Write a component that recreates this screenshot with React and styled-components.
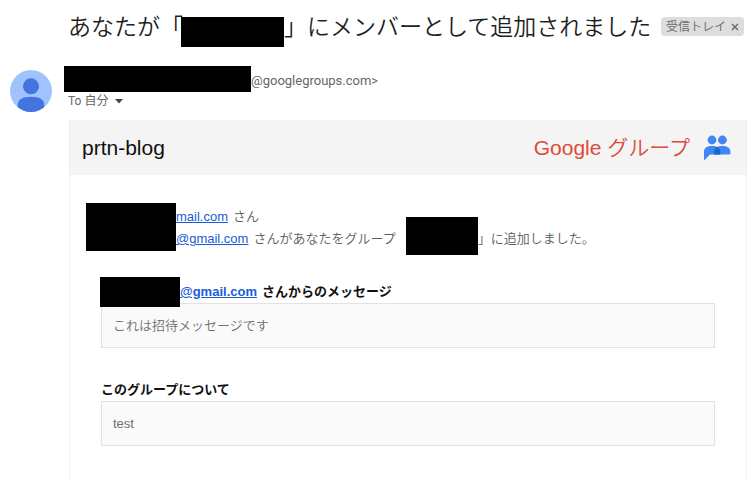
import styled, { createGlobalStyle } from "styled-components"

const GlobalStyle = createGlobalStyle`
  * {
    box-sizing: border-box;
  }

  body {
    margin: 0;
    background: #fff;
    overflow: hidden;
    font-family: "Liberation Sans", "Noto Sans CJK JP", sans-serif;
    font-size: 13px;
    color: #5c5c5c;
  }

  button {
    display: flex;
    padding: 0;
    border: 0;
    background: none;
    cursor: pointer;
  }
`

const Redacted = styled.span`
  position: relative;
  flex: none;
  width: ${(p) => p.$width}px;
  height: ${(p) => p.$height}px;
  margin-top: ${(p) => p.$top || 0}px;
  margin-left: ${(p) => p.$left || 0}px;
  background: #000;
`

const SubjectRow = styled.header`
  display: flex;
  align-items: flex-start;
  height: 47px;
  padding: 11px 6px 0 68px;
`

const Subject = styled.h1`
  display: flex;
  align-items: flex-start;
  margin: 0;
  font-family: "Noto Sans CJK JP", sans-serif;
  font-size: 23px;
  font-weight: 350;
  line-height: 28px;
  white-space: nowrap;
  color: #1f1f1f;
`

const Label = styled.span`
  display: flex;
  align-items: center;
  gap: 5px;
  height: 19px;
  margin: 6px 0 0 auto;
  padding: 0 5px;
  border-radius: 4px;
  background: #ddd;
  font-size: 12px;
  font-weight: 350;
  line-height: 18px;
  white-space: nowrap;
  color: #666;
`

const SenderRow = styled.div`
  display: flex;
  gap: 12px;
  margin-top: 19px;
  padding-left: 10px;
`

const Avatar = styled.svg`
  flex: none;
  width: 42px;
  height: 42px;
  margin-top: 4px;
`

const SenderLine = styled.div`
  display: flex;
  height: 26px;
  font-family: Roboto, sans-serif;
  line-height: 30px;
  color: #666;
`

const Recipient = styled.div`
  display: flex;
  align-items: center;
  gap: 7px;
  height: 18px;
  padding-left: 4px;
  font-family: Roboto, "Noto Sans CJK JP", sans-serif;
  font-size: 12px;
  line-height: 18px;
  color: #666;
`

const Card = styled.main`
  min-height: 380px;
  margin: 8px 3px 0 69px;
  border: 1px solid #f1f1f1;
  border-top: 0;
`

const CardHeader = styled.div`
  display: flex;
  align-items: center;
  justify-content: space-between;
  height: 55px;
  padding: 0 15px 0 12px;
  background: #f4f4f4;
  font-size: 21px;
  line-height: 24px;
`

const GroupName = styled.span`
  color: #111;
`

const Brand = styled.span`
  display: flex;
  align-items: center;
  gap: 13px;
  font-weight: 350;
  color: #dd4b39;
`

const GroupsLogo = styled.svg`
  width: 28px;
  height: 26px;
`

const Intro = styled.div`
  display: flex;
  padding: 28px 16px 0;
`

const Lines = styled.div`
  padding-top: 3px;
  line-height: 22px;
`

const Line = styled.div`
  display: flex;
  gap: 5px;
  height: 22px;
  font-weight: 350;
  white-space: nowrap;
`

const Mail = styled.a`
  font-weight: ${(p) => (p.$bold ? 700 : 400)};
  color: #1a5cd7;
`

const Closing = styled.span`
  display: flex;
`

const Section = styled.section`
  padding: 0 31px;
  margin-top: ${(p) => p.$gap}px;
`

const SectionTitle = styled.h2`
  display: flex;
  gap: 5px;
  height: 26px;
  margin: 0;
  font-size: 13px;
  font-weight: 700;
  line-height: 30px;
  white-space: nowrap;
  color: #111;
`

const Sender = styled.span`
  display: flex;
`

const Message = styled.p`
  height: 45px;
  margin: 0;
  padding: 0 11px;
  border: 1px solid #e2e2e2;
  background: #fafafa;
  line-height: 43px;
  font-weight: 350;
  color: #6f6f6f;
`

const App = () => {
  return (
    <>
      <GlobalStyle />
      <SubjectRow>
        <Subject>
          あなたが「
          <Redacted $width={103} $height={30} $top={6} $left={-2} />
          」にメンバーとして追加されました
        </Subject>
        <Label>
          受信トレイ
          <button type="button" aria-label="削除">
            <svg width="8" height="8" viewBox="0 0 8 8" stroke="#666" strokeWidth="1.4">
              <path d="M1 1l6 6M7 1L1 7" />
            </svg>
          </button>
        </Label>
      </SubjectRow>

      <SenderRow>
        <Avatar viewBox="0 0 42 42">
          <circle cx="21" cy="21" r="21" fill="#a0c3ff" />
          <circle cx="21" cy="16.3" r="8" fill="#4374e0" />
          <path
            d="M7.8 37.3V34.5C7.8 29.5 13 26.8 21 26.8S34.2 29.5 34.2 34.5V37.3A21 21 0 0 1 7.8 37.3Z"
            fill="#4374e0"
          />
        </Avatar>
        <div>
          <SenderLine>
            <Redacted $width={187} $height={26} />
            @googlegroups.com&gt;
          </SenderLine>
          <Recipient>
            To 自分
            <button type="button" aria-label="詳細を表示">
              <svg width="8" height="5" viewBox="0 0 8 5" fill="#444">
                <path d="M0 0h8L4 4.5z" />
              </svg>
            </button>
          </Recipient>
        </div>
      </SenderRow>

      <Card>
        <CardHeader>
          <GroupName>prtn-blog</GroupName>
          <Brand>
            <span>Google グループ</span>
            <GroupsLogo viewBox="0 0 28 26">
              <circle cx="9" cy="5" r="4.4" fill="#4285f4" />
              <circle cx="19.4" cy="5" r="4.4" fill="#4285f4" />
              <path
                d="M1 25.5V16.5C1 12.8 4.5 11 9 11S17.2 12.8 17.2 16.5V19.6H7Z"
                fill="#4285f4"
              />
              <path
                d="M11 19.6V16.5C11 12.8 14.5 11 19.2 11S27.4 12.8 27.4 16.5V18.2Q27.4 19.6 26 19.6Z"
                fill="#4285f4"
              />
              <path d="M11 19.6V16.5C11 14.6 12.2 13 14.1 12C16 13 17.2 14.6 17.2 16.5V19.6Z" fill="#1967d2" />
            </GroupsLogo>
          </Brand>
        </CardHeader>

        <Intro>
          <Redacted $width={90} $height={48} />
          <Lines>
            <Line>
              <Mail href="#">mail.com</Mail>
              <span>さん</span>
            </Line>
            <Line>
              <Mail href="#">@gmail.com</Mail>
              <span>さんがあなたをグループ</span>
              <Closing>
                <Redacted $width={72} $height={38} $top={-11} $left={5} />
                <span>」に追加しました。</span>
              </Closing>
            </Line>
          </Lines>
        </Intro>

        <Section $gap={26}>
          <SectionTitle>
            <Sender>
              <Redacted $width={80} $height={30} $left={-1} />
              <Mail href="#" $bold>
                @gmail.com
              </Mail>
            </Sender>
            <span>さんからのメッセージ</span>
          </SectionTitle>
          <Message>これは招待メッセージです</Message>
        </Section>

        <Section $gap={27}>
          <SectionTitle>このグループについて</SectionTitle>
          <Message>test</Message>
        </Section>
      </Card>
    </>
  )
}

export default App
